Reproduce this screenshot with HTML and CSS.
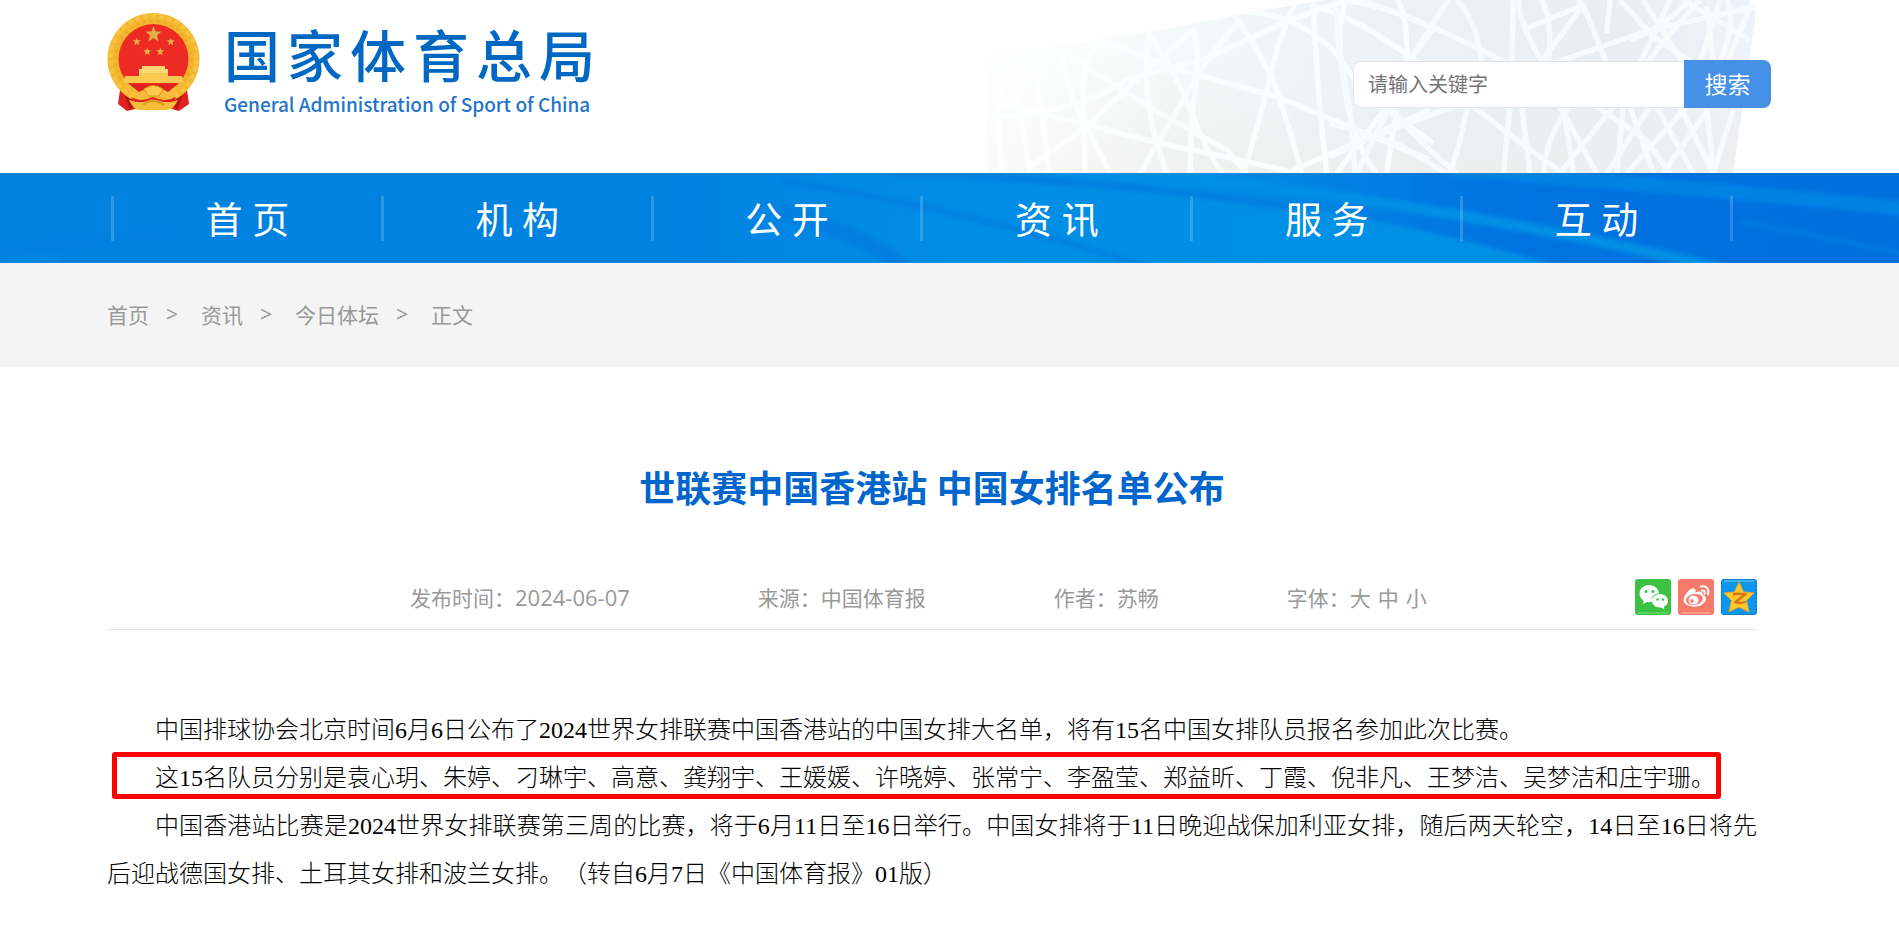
FILE: index.html
```html
<!DOCTYPE html>
<html lang="zh-CN">
<head>
    <meta charset="UTF-8">
    <meta name="viewport" content="width=device-width, initial-scale=1.0">
    <title>世联赛中国香港站 中国女排名单公布</title>
    <link rel="stylesheet" href="styles.css">
</head>
<body>
    <header class="header">
        <svg class="header-bg" viewBox="0 0 770 173" aria-hidden="true">
            <defs>
                <linearGradient id="netFill" x1="0" x2="1" y1="0" y2="0">
                    <stop offset="0" stop-color="#fcfefd"/>
                    <stop offset=".25" stop-color="#f4f9f9"/>
                    <stop offset=".5" stop-color="#ecf3f6"/>
                    <stop offset=".8" stop-color="#e9eef3"/>
                    <stop offset="1" stop-color="#eff2fa"/>
                </linearGradient>
                <linearGradient id="netShade" x1="0" x2="0" y1="0" y2="1">
                    <stop offset=".3" stop-color="#eeeeec" stop-opacity="0"/>
                    <stop offset="1" stop-color="#eeeeec" stop-opacity=".7"/>
                </linearGradient>
                <linearGradient id="netFade" x1="0" x2="1" y1="0" y2="0">
                    <stop offset="0" stop-color="#fff" stop-opacity=".6"/>
                    <stop offset=".25" stop-color="#fff" stop-opacity="0"/>
                </linearGradient>
                <clipPath id="netClip">
                    <path d="M0 52 L60 48 L110 40 L200 25 L270 11 L340 0 H764 Q770 6 768 20 L746 173 H0 Z"/>
                </clipPath>
            </defs>
            <g clip-path="url(#netClip)">
                <rect width="770" height="173" fill="url(#netFill)"/>
                <rect width="770" height="173" fill="url(#netShade)"/>
                <g fill="none" stroke="#fafdfe" stroke-width="16" stroke-linejoin="round">
                    <g transform="translate(-27) scale(.3333)">
                        <path d="M210 500 L385 375 L550 220 L700 90"/>
                        <path d="M820 40 Q870 110 935 230 Q980 350 1025 520"/>
                        <path d="M1005 10 Q950 130 930 230 Q900 360 850 520"/>
                        <path d="M80 350 Q330 350 500 240 L740 175 L990 60 L1160 0"/>
                        <path d="M420 120 L640 205 L950 290 L1180 385 L1410 480"/>
                        <path d="M300 140 L380 200 L600 340 L800 450 L860 520"/>
                        <path d="M560 90 Q650 220 700 350 T790 520"/>
                        <path d="M700 80 Q725 170 695 350 L690 520"/>
                        <path d="M845 60 Q770 130 710 230 Q640 350 540 520"/>
                        <path d="M80 300 L385 375 L600 430 L840 480 L1010 520"/>
                        <path d="M305 140 Q320 290 380 380 L450 520"/>
                        <path d="M440 110 Q360 160 370 300 L375 520"/>
                        <path d="M570 110 Q540 240 590 430 L620 520"/>
                        <path d="M1060 10 Q1070 260 1100 520"/>
                        <path d="M1160 0 Q1120 80 1160 300 Q1190 450 1250 520"/>
                        <path d="M850 35 Q1000 40 1120 150 L1200 260"/>
                        <path d="M1070 20 Q1200 60 1350 170 L1410 210"/>
                        <path d="M1310 0 Q1345 40 1340 190"/>
                        <path d="M1160 0 Q1290 20 1420 85 L1350 180"/>
                        <path d="M1000 510 L1230 410 L1410 330"/>
                        <path d="M1280 320 L1130 520 M1270 320 L1420 430"/>
                        <path d="M1310 330 L1280 520"/>
                        <path d="M80 225 L200 150 M320 140 Q210 200 240 300 L270 520 M250 150 Q160 200 180 330 L210 520 M200 150 Q80 230 130 520"/>
                    </g>
                    <g transform="translate(343) scale(.3333)" stroke="#f8fbfd">
                        <path d="M360 -10 L240 180 M80 0 Q290 60 530 190 M380 0 Q440 60 455 190"/>
                        <path d="M20 20 Q20 150 60 330 L75 520"/>
                        <path d="M550 0 L545 190 M565 0 Q570 80 640 190 M635 0 Q670 60 655 190"/>
                        <path d="M590 85 L760 15 L830 190 M760 15 L630 190 M745 0 L770 40"/>
                        <path d="M670 190 L960 90 L1280 20 M840 0 L830 100 M870 0 L970 110 L1090 190"/>
                        <path d="M1020 0 L930 190 M940 0 L1060 190 M1080 0 Q990 90 900 120 M1110 0 Q1000 120 950 190 M1170 0 L1110 190 M1130 20 L1150 190 M1190 0 Q1220 60 1170 190 M1270 0 L1190 190 M1060 0 L1260 120"/>
                        <path d="M0 370 L200 430 L350 520 M0 470 L180 390 L400 310 M180 320 L80 520 M170 320 L310 460 L380 520"/>
                        <path d="M410 320 Q400 400 360 520 M430 320 L560 420 L700 520 M540 320 L520 520 M575 320 L600 520"/>
                        <path d="M720 320 Q650 400 640 520 M690 320 L800 520 M850 320 L690 520 M700 320 L730 520 M800 320 L950 420 L1020 520"/>
                        <path d="M880 320 L860 520 M960 320 L830 520 M1070 320 L890 520 M980 320 L1090 520 M900 320 L970 520 M1140 320 L1000 520 M1050 320 L1150 520 M1130 320 L1150 520 M1210 330 L1150 520"/>
                    </g>
                </g>
                <rect width="770" height="173" fill="url(#netFade)"/>
            </g>
        </svg>
        <a class="logo" href="#">
            <svg class="emblem" viewBox="0 0 93 98" aria-hidden="true">
                <path d="M14 70 L11 91 L20 98 L32 95 H61 L72 98 L82 91 L79 70 Z" fill="#e3211c"/>
                <path d="M15 76 L23 97 L31 88 Z M78 76 L70 97 L62 88 Z" fill="#b51512"/>
                <circle cx="46.500" cy="46" r="46" fill="#f3b62c"/>
                <circle cx="46.500" cy="46" r="43" fill="none" stroke="#f7c440" stroke-width="4" stroke-dasharray="5 3"/>
                <circle cx="46.500" cy="46" r="38" fill="none" stroke="#eaa928" stroke-width="2" stroke-dasharray="3 4"/>
                <circle cx="46.500" cy="46" r="35" fill="#ed2b24"/>
                <path id="star" d="M46.500 13 L48.500 18.500 L54.500 18.500 L50 22.500 L51.500 28.500 L46.500 25 L41.500 28.500 L43 22.500 L38.500 18.500 L44.500 18.500 Z" fill="#e4b046"/>
                <use href="#star" transform="translate(6.500 18) scale(.5)"/>
                <use href="#star" transform="translate(40.500 18) scale(.5)"/>
                <use href="#star" transform="translate(17 28) scale(.5)"/>
                <use href="#star" transform="translate(30 28) scale(.5)"/>
                <path d="M35 53 H58 V56 H61 V60 H32 V56 H35 Z" fill="#fbd774"/>
                <path d="M32 60 H61 V63 H75 L77 70 H16 L18 63 H32 Z" fill="#f9c851"/>
                <path d="M18 71 H75 L67 79 H26 Z" fill="#e3211c"/>
                <path d="M15 68 L22 71 L32 79 L38 76 H55 L61 79 L71 71 L78 68 L70 80 L58 86 L46 84 L34 86 L23 80 Z" fill="#f6bb38"/>
                <path d="M24 84 Q34 90 46 84 Q58 90 69 84 L67 89 H26 Z" fill="#e3211c"/>
                <path d="M37 76 Q46 69 56 76 L52 83 H41 Z" fill="#f9ca50" stroke="#dc981e"/>
                <path d="M22 87 Q34 91 40 88 Q46 85 53 88 Q60 91 71 87 Q66 98 58 97 H34 Q27 98 22 87 Z" fill="#f6bd3a"/>
                <path d="M36 92 Q46 84 57 92" fill="none" stroke="#dc981e" stroke-width="2"/>
            </svg>
            <span class="logo-text">
                <span class="logo-cn">国家体育总局</span>
                <span class="logo-en">General Administration of Sport of China</span>
            </span>
        </a>
        <form class="search">
            <input class="search-input" type="text" id="keyword" aria-label="请输入关键字" placeholder="请输入关键字">
            <button class="search-btn" type="submit">搜索</button>
        </form>
    </header>

    <nav class="nav">
        <svg class="nav-bg" viewBox="0 0 1899 90" preserveAspectRatio="none" aria-hidden="true">
            <defs>
                <linearGradient id="navFill" x1="0" x2="1" y1="0" y2="0">
                    <stop offset="0" stop-color="#0082e1"/>
                    <stop offset=".35" stop-color="#0082e1"/>
                    <stop offset=".5" stop-color="#008de5"/>
                    <stop offset=".72" stop-color="#0091e6"/>
                    <stop offset="1" stop-color="#0091e6"/>
                </linearGradient>
                <linearGradient id="navDark" x1="0" x2="1" y1="0" y2="0">
                    <stop offset="0" stop-color="#0074e0" stop-opacity="0"/>
                    <stop offset=".45" stop-color="#0074e0"/>
                    <stop offset="1" stop-color="#006fdf"/>
                </linearGradient>
                <filter id="soft" x="-5%" y="-20%" width="110%" height="140%">
                    <feGaussianBlur stdDeviation="2"/>
                </filter>
            </defs>
            <rect width="1899" height="90" fill="url(#navFill)"/>
            <g filter="url(#soft)" fill="none">
                <path d="M1160 -5 L1200 22 Q1390 42 1565 95 H1910 V-5 Z" fill="url(#navDark)"/>
                <path d="M1190 6 Q1450 32 1720 95" stroke="#0090e6" stroke-width="10"/>
                <path d="M1450 -4 Q1690 14 1910 36" stroke="#0084e3" stroke-width="14"/>
                <path d="M1740 48 L1910 82" stroke="#007de2" stroke-width="4"/>
                <path d="M890 1 Q1080 3 1290 34" stroke="#0080e1" stroke-width="8"/>
                <path d="M780 8 Q940 30 1150 94" stroke="#0080e1" stroke-width="6"/>
                <path d="M780 38 Q860 60 905 95" stroke="#007fe1" stroke-width="16"/>
                <path d="M0 80 L160 58" stroke="#007ee0" stroke-width="3"/>
                <path d="M0 92 L60 84" stroke="#0088e3" stroke-width="8"/>
            </g>
        </svg>
        <a class="nav-item" href="#">首 页</a>
        <a class="nav-item" href="#">机 构</a>
        <a class="nav-item" href="#">公 开</a>
        <a class="nav-item" href="#">资 讯</a>
        <a class="nav-item" href="#">服 务</a>
        <a class="nav-item" href="#">互 动</a>
    </nav>

    <div class="crumbs">
        <a href="#">首页</a><span class="sep">&gt;</span>
        <a href="#">资讯</a><span class="sep">&gt;</span>
        <a href="#">今日体坛</a><span class="sep">&gt;</span>
        <span>正文</span>
    </div>

    <main class="article">
        <h1 class="title">世联赛中国香港站 中国女排名单公布</h1>
        <div class="meta">
            <span>发布时间：<time datetime="2024-06-07">2024-06-07</time></span>
            <span>来源：中国体育报</span>
            <span>作者：苏畅</span>
            <span class="sizes">字体：<button type="button">大</button><button type="button">中</button><button type="button">小</button></span>
            <div class="share">
                <a href="#" aria-label="微信">
                    <svg viewBox="0 0 36 36">
                        <rect width="36" height="36" rx="3" fill="#3bc243"/>
                        <path d="M3 34 H33" stroke="#7fdc84"/>
                        <path d="M14 6 C8.500 6 4.500 10 4.500 14.500 C4.500 17.500 6 20 8.500 21.500 L8 25 L12 23 Q15 23.500 17 22.500 C16 17 20 14.500 24 14.500 C23.500 9.500 19 6 14 6 Z" fill="#fff"/>
                        <path d="M25 15 C20.500 15 17 18 17 21.800 C17 26 21 29 26 28.500 L29.500 30.500 L29 27.500 C31.500 26.500 33 24.500 33 21.800 C33 18 29.500 15 25 15 Z" fill="#fff"/>
                        <g fill="#3bc243"><circle cx="11" cy="12.500" r="1.500"/><circle cx="18" cy="12.500" r="1.500"/><circle cx="22.500" cy="20.500" r="1.300"/><circle cx="28" cy="20.500" r="1.300"/></g>
                    </svg>
                </a>
                <a href="#" aria-label="微博">
                    <svg viewBox="0 0 36 36">
                        <rect width="36" height="36" rx="3" fill="#f67969"/>
                        <path d="M3 34 H33" stroke="#fbb5ab"/>
                        <path d="M14 9.500 C17 8.500 18 10.500 17.500 13.500 C21 12 25 12 24.500 16 C28 17 29 19.500 27 22.500 C24 27.500 17 28.500 12 27 C5.500 25.500 4 21 7 16.500 C9 13 11.500 10.500 14 9.500 Z" fill="#fff"/>
                        <ellipse cx="16.500" cy="20.500" rx="8.500" ry="5.500" transform="rotate(-8 16.500 20.500)" fill="#f67969"/>
                        <ellipse cx="15.500" cy="21" rx="5" ry="4.500" fill="#fff"/>
                        <circle cx="14" cy="22" r="1.800" fill="#f67969"/>
                        <path d="M23 7.500 C28.500 6 31.500 10.500 30 15.500 M24 11.500 Q27.500 11 26.500 15" fill="none" stroke="#fff" stroke-width="2" stroke-linecap="round"/>
                    </svg>
                </a>
                <a href="#" aria-label="QQ空间">
                    <svg viewBox="0 0 36 36">
                        <rect width="36" height="36" rx="3" fill="#0c96ee"/>
                        <path d="M3 2 H33" stroke="#7cc8f8"/>
                        <rect x=".5" y=".5" width="35" height="35" rx="3" fill="none" stroke="#0a6fc0" stroke-dasharray="2 2"/>
                        <path d="M18 3 L22.500 13 L33 14 L25.500 21.500 L28 33 L18 28 L8 33 L10.500 21.500 L3 14 L13.500 13 Z" fill="#fdc92c" stroke="#f3a51c" stroke-linejoin="round"/>
                        <path d="M12 15.500 Q18 14 24 15.500 L14.500 23 Q20 25 25 22.500" fill="none" stroke="#d9761a" stroke-width="2.500"/>
                    </svg>
                </a>
            </div>
        </div>
        <div class="content">
            <p>中国排球协会北京时间6月6日公布了2024世界女排联赛中国香港站的中国女排大名单，将有15名中国女排队员报名参加此次比赛。</p>
            <p class="marked">这15名队员分别是袁心玥、朱婷、刁琳宇、高意、龚翔宇、王媛媛、许晓婷、张常宁、李盈莹、郑益昕、丁霞、倪非凡、王梦洁、吴梦洁和庄宇珊。</p>
            <p>中国香港站比赛是2024世界女排联赛第三周的比赛，将于6月11日至16日举行。中国女排将于11日晚迎战保加利亚女排，随后两天轮空，14日至16日将先后迎战德国女排、土耳其女排和波兰女排。（转自6月7日《中国体育报》01版）</p>
        </div>
    </main>
</body>
</html>
```

FILE: styles.css
```css
* {
    box-sizing: border-box;
}
body {
    margin: 0;
    font-family: "Open Sans", "Noto Sans CJK SC", sans-serif;
    background: #fff;
    color: #000;
    text-spacing-trim: space-all;
}
a {
    color: inherit;
    text-decoration: none;
}
button {
    font: inherit;
    color: inherit;
    border: none;
    background: none;
    padding: 0;
    cursor: pointer;
}

/* header */
.header {
    position: relative;
    display: flex;
    justify-content: space-between;
    align-items: flex-start;
    height: 173px;
    padding: 13px 128px 0 107px;
}
.header-bg {
    position: absolute;
    top: 0;
    right: 142px;
    width: 770px;
    height: 173px;
}
.logo {
    position: relative;
    display: flex;
    gap: 24px;
    font-family: "Noto Sans CJK SC", sans-serif;
    white-space: nowrap;
}
.emblem {
    width: 93px;
    height: 98px;
}
.logo-text {
    display: flex;
    flex-direction: column;
}
.logo-cn {
    font-size: 56px;
    font-weight: 500;
    line-height: 80px;
    letter-spacing: 7px;
    color: #0068c3;
}
.logo-en {
    font-size: 19px;
    font-weight: 500;
    line-height: 22px;
    color: #1f74cc;
}
.search {
    position: relative;
    display: flex;
    align-items: flex-end;
    margin-top: 47px;
}
.search-input {
    width: 331px;
    height: 47px;
    padding: 0 14px;
    border: 1px solid #e1e6ea;
    border-right: none;
    border-radius: 8px 0 0 8px;
    background: #fff;
    font-family: inherit;
    font-size: 20px;
}
.search-input::placeholder {
    color: #757575;
}
.search-btn {
    width: 87px;
    height: 48px;
    padding-bottom: 2px;
    border-radius: 0 8px 8px 0;
    background: #4690e8;
    color: #fff;
    font-size: 23px;
}

/* nav */
.nav {
    position: relative;
    display: flex;
    height: 90px;
    align-items: center;
    padding: 0 166px 0 111px;
    background: #0082e1;
}
.nav-bg {
    position: absolute;
    inset: 0;
    width: 100%;
    height: 100%;
}
.nav-item {
    position: relative;
    flex: 1;
    height: 45px;
    line-height: 47px;
    border-left: 3px solid rgba(255, 255, 255, 0.18);
    text-align: center;
    color: #fff;
    font-size: 37px;
}
.nav-item:last-child {
    border-right: 3px solid rgba(255, 255, 255, 0.18);
}

/* breadcrumb */
.crumbs {
    display: flex;
    align-items: center;
    height: 104px;
    padding: 0 107px 2px;
    background: #f4f4f4;
    color: #999;
    font-size: 21px;
}
.sep {
    margin: 0 23px 0 17px;
}

/* article */
.article {
    padding: 92px 142px 48px 107px;
}
.title {
    margin: 0;
    text-align: center;
    font-size: 36px;
    line-height: 60px;
    color: #0066cc;
}
.meta {
    display: flex;
    align-items: center;
    gap: 128px;
    height: 66px;
    margin-top: 45px;
    padding-left: 303px;
    border-bottom: 1px solid #e5e5e5;
    color: #999;
    font-size: 21px;
    white-space: nowrap;
}
.meta time {
    font-size: 22px;
}
.sizes {
    display: flex;
}
.sizes button {
    margin-right: 7px;
}
.share {
    display: flex;
    gap: 7px;
    margin-left: auto;
}
.share svg {
    display: block;
    width: 36px;
    height: 36px;
}
.content {
    margin-top: 76px;
    font-family: "Liberation Serif", "Noto Sans CJK SC", serif;
    font-size: 24px;
    font-weight: 300;
    line-height: 48px;
    text-align: justify;
}
.content p {
    margin: 0;
    text-indent: 2em;
}
.marked {
    position: relative;
}
.marked::after {
    content: "";
    position: absolute;
    inset: -2px 36px 3px 5px;
    border: 5px solid #f00;
    border-radius: 3px;
}
```
